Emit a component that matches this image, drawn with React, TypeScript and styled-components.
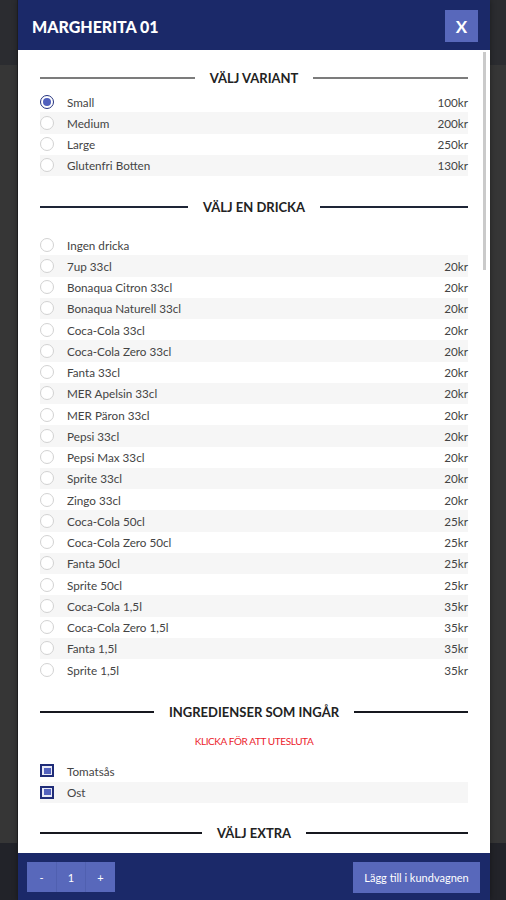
import React from "react";
import styled, { createGlobalStyle } from "styled-components";

const Global = createGlobalStyle`
  html, body { margin: 0; padding: 0; height: 100%; }
  body { font-family: Lato, "Open Sans", Arial, sans-serif; background: #363636; overflow: hidden; }
  * { box-sizing: border-box; }
`;

const Page = styled.div`
  height: 900px;
  display: flex;
  flex-direction: column;
`;
const PageTop = styled.div`
  height: 65px;
  background: #2b2c30;
`;
const PageMiddle = styled.div`
  flex: 1;
  background: #363636;
`;
const PageBottom = styled.div`
  height: 57px;
  background: #222329;
`;

const Modal = styled.div`
  position: fixed;
  left: 18px;
  top: 0;
  width: 472px;
  height: 900px;
  display: flex;
  flex-direction: column;
  box-shadow: -1px 0 0 #1d1d1f, 0 0 6px rgba(0, 0, 0, 0.4);
`;

const Header = styled.div`
  height: 50px;
  background: #1b2969;
  display: flex;
  align-items: center;
  justify-content: space-between;
  padding: 0 12px 0 14px;
`;
const Title = styled.h1`
  margin: 2px 0 0;
  color: #fff;
  font-size: 16px;
  font-weight: 900;
`;
const CloseButton = styled.button`
  width: 33px;
  height: 32px;
  margin-top: 2px;
  border: none;
  background: #5868bb;
  color: #fff;
  font-family: Lato, Arial, sans-serif;
  font-size: 17px;
  font-weight: 700;
  padding: 0;
`;

const Body = styled.div`
  flex: 1;
  min-height: 0;
  background: #fff;
  display: flex;
`;
const Content = styled.div`
  flex: 1;
  overflow: hidden;
  padding: 20px 14px 40px 22px;
`;
const Track = styled.div`
  width: 8px;
  padding: 2px 4px 0 1px;
  background: #fff;
`;
const Thumb = styled.div`
  height: 218px;
  background: #cacaca;
`;

const SectionHeading = styled.div<{ $line: string; $mt: number; $mb: number }>`
  display: flex;
  align-items: center;
  gap: 15px;
  margin-top: ${(p) => p.$mt}px;
  margin-bottom: ${(p) => p.$mb}px;
  height: 16px;
  font-size: 13px;
  font-weight: 700;
  color: #222;
  white-space: nowrap;
  &::before, &::after {
    content: "";
    flex: 1;
    height: 2px;
    background: ${(p) => p.$line};
  }
`;

const Note = styled.div`
  text-align: center;
  color: #ec1c2c;
  font-size: 10px;
  line-height: 12px;
  letter-spacing: -0.4px;
  margin: 15px 0 13px;
`;

const List = styled.div`
  display: flex;
  flex-direction: column;
`;
const Row = styled.label<{ $alt: boolean }>`
  display: flex;
  align-items: center;
  height: 21.25px;
  font-size: 11.7px;
  color: #444;
  background: ${(p) => (p.$alt ? "#f6f6f6" : "transparent")};
`;
const RowName = styled.span`
  flex: 1;
  margin-left: 13px;
`;
const Price = styled.span`
  color: #444;
`;

const Radio = styled.span<{ $on: boolean }>`
  width: 14px;
  height: 14px;
  border-radius: 50%;
  border: 1px solid ${(p) => (p.$on ? "#24327e" : "#d2d2d2")};
  background: #fff;
  display: flex;
  align-items: center;
  justify-content: center;
  &::after {
    content: "";
    width: 8px;
    height: 8px;
    border-radius: 50%;
    background: ${(p) => (p.$on ? "#4f5fbd" : "transparent")};
  }
`;
const Check = styled.span<{ $on: boolean }>`
  width: 14px;
  height: 13px;
  border: 2px solid ${(p) => (p.$on ? "#1f2c78" : "#cfcfcf")};
  background: ${(p) => (p.$on ? "#e8eaf6" : "#fff")};
  padding: 1.5px;
  display: flex;
  &::after {
    content: "";
    flex: 1;
    background: ${(p) => (p.$on ? "#5362bd" : "transparent")};
  }
`;

const Footer = styled.div`
  height: 47px;
  background: #1b2969;
  display: flex;
  align-items: flex-start;
  justify-content: space-between;
  padding: 9px 10px 0 9px;
`;
const Qty = styled.div`
  display: flex;
  height: 30px;
`;
const QtyCell = styled.button<{ $w: number }>`
  width: ${(p) => p.$w}px;
  height: 30px;
  border: none;
  border-right: 1px solid #5060b0;
  background: #5868bb;
  color: #fff;
  font-family: Lato, Arial, sans-serif;
  font-size: 11px;
  padding: 0;
  &:last-child { border-right: none; }
`;
const AddButton = styled.button`
  width: 127px;
  height: 31px;
  border: none;
  background: #5868bb;
  color: #fff;
  font-family: Lato, Arial, sans-serif;
  font-size: 11px;
  padding: 0;
`;

const variants = [
  ["Small", "100kr"],
  ["Medium", "200kr"],
  ["Large", "250kr"],
  ["Glutenfri Botten", "130kr"],
];

const drinks = [
  ["Ingen dricka", ""],
  ["7up 33cl", "20kr"],
  ["Bonaqua Citron 33cl", "20kr"],
  ["Bonaqua Naturell 33cl", "20kr"],
  ["Coca-Cola 33cl", "20kr"],
  ["Coca-Cola Zero 33cl", "20kr"],
  ["Fanta 33cl", "20kr"],
  ["MER Apelsin 33cl", "20kr"],
  ["MER Päron 33cl", "20kr"],
  ["Pepsi 33cl", "20kr"],
  ["Pepsi Max 33cl", "20kr"],
  ["Sprite 33cl", "20kr"],
  ["Zingo 33cl", "20kr"],
  ["Coca-Cola 50cl", "25kr"],
  ["Coca-Cola Zero 50cl", "25kr"],
  ["Fanta 50cl", "25kr"],
  ["Sprite 50cl", "25kr"],
  ["Coca-Cola 1,5l", "35kr"],
  ["Coca-Cola Zero 1,5l", "35kr"],
  ["Fanta 1,5l", "35kr"],
  ["Sprite 1,5l", "35kr"],
];

const ingredients = ["Tomatsås", "Ost"];

const extras = [
  "Ananas", "Bacon", "Banan", "Bearnaisesås", "Champinjoner", "Curry", "Fefferoni",
  "Feta", "Gorgonzola", "Gurka", "Jalapeños", "Kebabkött", "Kebabsås", "Kyckling",
  "Lök", "Mozzarella", "Musslor", "Oliver", "Oxfilé", "Paprika", "Parmaskinka",
  "Pesto", "Räkor", "Rödlök", "Ruccola", "Salami", "Skinka", "Soltorkade tomater",
  "Sparris", "Tonfisk", "Tomat", "Vitlök", "Vitlökssås", "Extra ost", "Köttfärs",
  "Chorizo", "Pepperoni", "Kapris", "Ägg", "Spenat", "Cheddar", "Getost",
  "Kronärtskocka", "Majs", "Nötkött", "Oregano", "Pommes", "Sardeller",
];

export default function App() {
  return (
    <>
      <Global />
      <Page>
        <PageTop />
        <PageMiddle />
        <PageBottom />
      </Page>
      <Modal>
        <Header>
          <Title>MARGHERITA 01</Title>
          <CloseButton>X</CloseButton>
        </Header>
        <Body>
          <Content>
            <SectionHeading $line="#7c7c7c" $mt={0} $mb={5}>VÄLJ VARIANT</SectionHeading>
            <List>
              {variants.map(([n, p], i) => (
                <Row key={n} $alt={i % 2 === 1}>
                  <Radio $on={i === 0} />
                  <RowName>{n}</RowName>
                  <Price>{p}</Price>
                </Row>
              ))}
            </List>
            <SectionHeading $line="#1e2536" $mt={23} $mb={19}>VÄLJ EN DRICKA</SectionHeading>
            <List>
              {drinks.map(([n, p], i) => (
                <Row key={n} $alt={i % 2 === 1}>
                  <Radio $on={false} />
                  <RowName>{n}</RowName>
                  <Price>{p}</Price>
                </Row>
              ))}
            </List>
            <SectionHeading $line="#16181f" $mt={24} $mb={0}>INGREDIENSER SOM INGÅR</SectionHeading>
            <Note>KLICKA FÖR ATT UTESLUTA</Note>
            <List>
              {ingredients.map((n, i) => (
                <Row key={n} $alt={i % 2 === 1}>
                  <Check $on />
                  <RowName>{n}</RowName>
                </Row>
              ))}
            </List>
            <SectionHeading $line="#16181f" $mt={22} $mb={20}>VÄLJ EXTRA</SectionHeading>
            <List>
              {extras.map((n, i) => (
                <Row key={n} $alt={i % 2 === 1}>
                  <Check $on={false} />
                  <RowName>{n}</RowName>
                  <Price>10kr</Price>
                </Row>
              ))}
            </List>
          </Content>
          <Track>
            <Thumb />
          </Track>
        </Body>
        <Footer>
          <Qty>
            <QtyCell $w={30}>-</QtyCell>
            <QtyCell $w={29}>1</QtyCell>
            <QtyCell $w={29}>+</QtyCell>
          </Qty>
          <AddButton>Lägg till i kundvagnen</AddButton>
        </Footer>
      </Modal>
    </>
  );
}
